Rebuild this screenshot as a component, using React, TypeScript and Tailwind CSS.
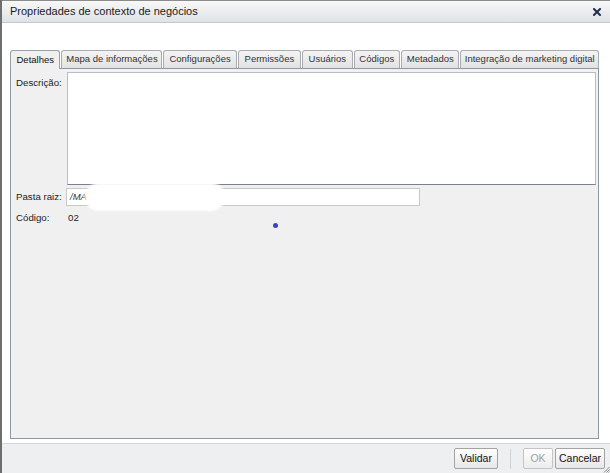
import React from "react";

const tabs: { label: string; w: string; active?: boolean }[] = [
  { label: "Detalhes", w: "w-[51px]", active: true },
  { label: "Mapa de informações", w: "w-[102px]" },
  { label: "Configurações", w: "w-[74px]" },
  { label: "Permissões", w: "w-[64px]" },
  { label: "Usuários", w: "w-[51px]" },
  { label: "Códigos", w: "w-[47px]" },
  { label: "Metadados", w: "w-[59px]" },
  { label: "Integração de marketing digital", w: "w-[140px]" },
];

function CloseIcon() {
  return (
    <svg width="8" height="8" viewBox="0 0 8 8">
      <path d="M1 1 L7 7 M7 1 L1 7" stroke="#22304c" strokeWidth="2" strokeLinecap="square" />
    </svg>
  );
}

function ResizeGrip() {
  return (
    <svg width="7" height="7" viewBox="0 0 7 7" className="absolute right-0 bottom-0">
      <path d="M6.5 1 L1 6.5 M6.5 3.5 L3.5 6.5 M6.5 5.5 L5.5 6.5" stroke="#8a8a8a" strokeWidth="1" />
    </svg>
  );
}

export default function App() {
  return (
    <div
      className="relative flex h-[473px] w-[610px] flex-col overflow-hidden border-l-2 border-[#6e6e6e] bg-white text-[#222]"
      style={{ fontFamily: '"Liberation Sans", Arial, sans-serif' }}
    >
      {/* title bar */}
      <div className="flex h-[23px] shrink-0 items-center justify-between border-t border-b border-t-[#8c8c8c] border-b-[#c4c7cc] bg-gradient-to-b from-[#f8f8f8] to-[#dfe2e6] pl-[8px] pr-[9px]">
        <span className="text-[11px] leading-none text-[#1a1a1a]">Propriedades de contexto de negócios</span>
        <CloseIcon />
      </div>

      {/* body */}
      <div className="flex flex-1 flex-col pl-[8px] pr-[11px] pt-[27px] pb-[4px]">
        {/* tab strip */}
        <div className="relative z-10 flex h-[18px] items-end gap-[1px]">
          {tabs.map((t) =>
            t.active ? (
              <div
                key={t.label}
                className={`${t.w} flex h-[19px] -mb-[1px] items-center justify-center rounded-t-[3px] border border-b-0 border-[#9aa0a8] bg-[#f0f0f0] text-[9.5px] text-[#111]`}
              >
                {t.label}
              </div>
            ) : (
              <div
                key={t.label}
                className={`${t.w} flex h-[18px] items-center justify-center rounded-t-[3px] border border-b-0 border-[#a8acb2] bg-gradient-to-b from-[#f4f4f4] to-[#e2e2e2] text-[9.5px] text-[#333]`}
              >
                {t.label}
              </div>
            )
          )}
        </div>

        {/* panel */}
        <div className="flex flex-1 flex-col border border-[#8e97a4] bg-[#f0f0f0] pt-[3px] pr-[2px]">
          <div className="flex">
            <div className="w-[56px] pl-[5px] pt-[4px] text-[9.7px] text-[#222]">Descrição:</div>
            <div className="h-[113px] flex-1 border border-[#b9bcc0] border-b-[#76808f] bg-white" />
          </div>

          <div className="mt-[3px] flex items-center">
            <div className="w-[55px] pl-[5px] text-[9.7px] text-[#222]">Pasta raiz:</div>
            <div className="relative flex h-[18px] w-[354px] items-center border border-[#c8c8c8] bg-white pl-[3px] text-[9.5px] italic text-[#333]">
              /MA
              <div className="absolute left-[18px] top-[-6px] h-[28px] w-[140px] rounded-[14px] bg-white blur-[1px]" />
            </div>
          </div>

          <div className="mt-[5px] flex items-center">
            <div className="w-[57px] pl-[5px] text-[9.7px] text-[#222]">Código:</div>
            <div className="text-[9.7px] text-[#222]">02</div>
          </div>

          <div className="ml-[262px] mt-[-3px] h-[5px] w-[5px] rounded-full bg-[#3545c8]" />
        </div>
      </div>

      {/* footer */}
      <div className="relative flex h-[30px] shrink-0 items-center justify-end border-t border-[#d6d6d6] bg-[#eeeff1] pr-[5px]">
        <button className="flex h-[21px] w-[44px] items-center justify-center rounded-[2px] border border-[#a3a3a3] bg-gradient-to-b from-[#ffffff] to-[#e6e6e6] text-[10.5px] text-[#111]">
          Validar
        </button>
        <div className="mx-[12px] h-[20px] w-px bg-[#d2d2d2]" />
        <button className="flex h-[21px] w-[30px] items-center justify-center rounded-[2px] border border-[#c4c4c4] bg-gradient-to-b from-[#ffffff] to-[#ececec] text-[10.5px] text-[#a0a0a0]">
          OK
        </button>
        <button className="ml-[2px] flex h-[21px] w-[50px] items-center justify-center rounded-[2px] border border-[#a3a3a3] bg-gradient-to-b from-[#ffffff] to-[#e6e6e6] text-[10.5px] text-[#111]">
          Cancelar
        </button>
        <ResizeGrip />
      </div>
    </div>
  );
}
